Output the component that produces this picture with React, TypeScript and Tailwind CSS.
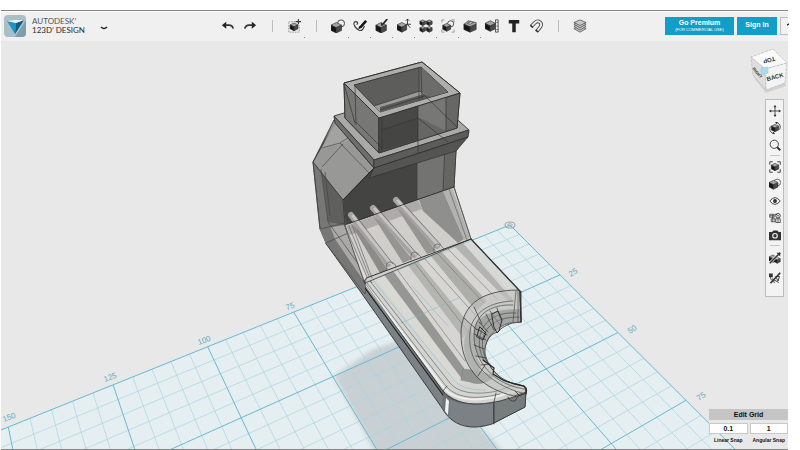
import React from "react";

/* ---------- Ground plane ---------- */

type Pt = [number, number];

// Perspective projection of a point on the work plane (millimetres) to scene units.
function project(u: number, v: number): Pt {
  const w = 1 - 0.001614 * u - 0.002751 * v;
  return [(510 - 3.358 * u + 0.4592 * v) / w, (225 + 0.6575 * u + 1.236 * v) / w];
}

const U_MAX = 168;
const V_MAX = 94;

function segment(a: Pt, b: Pt) {
  return `M${a[0].toFixed(1)} ${a[1].toFixed(1)}L${b[0].toFixed(1)} ${b[1].toFixed(1)}`;
}

function gridPath(major: boolean) {
  let d = "";
  for (let u = 0; u < U_MAX; u += 5) {
    if ((u % 25 === 0) === major) d += segment(project(u, 0), project(u, V_MAX * (1 - u / U_MAX)));
  }
  for (let v = 0; v < V_MAX; v += 5) {
    if ((v % 25 === 0) === major) d += segment(project(0, v), project(U_MAX * (1 - v / V_MAX), v));
  }
  return d;
}

const planeOutline = [project(0, 0), project(0, V_MAX), project(U_MAX, 0)]
  .map((p) => p.join(","))
  .join(" ");

const rulerMarks = [
  { x: 290, y: 309, t: "75", r: -20 },
  { x: 204, y: 343, t: "100", r: -20 },
  { x: 110, y: 380, t: "125", r: -20 },
  { x: 9, y: 420, t: "150", r: -20 },
  { x: 573, y: 275, t: "25", r: -32 },
  { x: 632, y: 332, t: "50", r: -32 },
  { x: 701, y: 399, t: "75", r: -32 },
];

function Ground() {
  return (
    <g>
      <polygon points={planeOutline} fill="#e5eef0" />
      <polygon
        points="334,376 372,350 400,340 520,470 385,470"
        fill="#c3cbcf"
        opacity="0.85"
        filter="url(#soft)"
      />
      <path d={gridPath(false)} stroke="#a9d6e2" strokeWidth="0.7" fill="none" />
      <path d={gridPath(true)} stroke="#68b9d3" strokeWidth="1" fill="none" />
      <ellipse cx="510" cy="225" rx="5" ry="3" fill="none" stroke="#93aebb" strokeWidth="1.2" />
      <ellipse cx="510" cy="225" rx="2.4" ry="1.3" fill="none" stroke="#93aebb" strokeWidth="0.8" />
      {rulerMarks.map((m) => (
        <text
          key={m.x}
          x={m.x}
          y={m.y}
          transform={`rotate(${m.r} ${m.x} ${m.y - 3})`}
          textAnchor="middle"
          fontSize="8"
          fill="#62a9c1"
          fontFamily='"Liberation Sans", sans-serif'
        >
          {m.t}
        </text>
      ))}
    </g>
  );
}

/* ---------- Solid model ---------- */

function Handle() {
  return (
    <g strokeLinejoin="round" strokeLinecap="round">
      {/* outer wall */}
      <path
        d="M326 243L345 225L365 282L442 390C450 402 470 406 492 402L526 390L525 407L492 424C470 431 452 426 442 408L360 291Z"
        fill="#7b8184"
        stroke="#333"
        strokeWidth="0.9"
      />
      <path d="M443 393L442 407L449 418L450 400Z" fill="#6d7376" />
      <path d="M446 398L445 411L448 415L449 401Z" fill="#f1f3f3" />
      <path d="M494 402L526 390L525 407L494 423Z" fill="#777c7d" stroke="#333" strokeWidth="0.7" />
      {/* top surface */}
      <path
        d="M365 283Q364 279 369 277L471 239L518 289L521 293L521 322L512 323C504 326 500 329 498 332C492 333 488 338 486 344C484 350 484 356 486 360C489 364 491 368 493 370C498 376 502 380 509 382C514 384 520 385 524 386Q528 388 526 393C518 396 510 398 500 401C478 406 457 406 443 391Z"
        fill="#d3d3d0"
        fillOpacity="0.95"
        stroke="#3a3a3a"
        strokeWidth="0.9"
      />
      {/* bands across the grip */}
      <path d="M374 276L447 374Q454 386 470 383L462 377L383 272Z" fill="#d9d9d4" />
      <path d="M382 272L392 269L464 368L462 379Z" fill="#969694" />
      <path d="M392 269L407 264L466 341L464 367Z" fill="#d6d5d1" />
      <path d="M407 264L417 260L471 326L463 338Z" fill="#b4b4b1" />
      <path d="M417 260L430 255L477 307L471 325Z" fill="#d7d6d2" />
      <path d="M430 255L441 251L487 301L476 311Z" fill="#adadaa" />
      <path d="M441 251L454 246L505 292L489 303Z" fill="#d7d6d3" />
      <path d="M454 246L463 243L514 301L508 301Z" fill="#b3b4b1" />
      <path d="M463 243L471 240L517 290L511 294Z" fill="#d7d9d6" />
      <path
        d="M396 268L465 361M414 262L470 334M424 258L477 317M437 253L484 303M448 249L497 299"
        fill="none"
        stroke="#70706e"
        strokeWidth="0.6"
      />
      <path d="M461 380L463 369L479 371L493 376L490 380Q480 386 470 382Z" fill="#929491" stroke="#707070" strokeWidth="0.4" />
      {/* work-plane lines seen through the body */}
      <path d="M372 279L453 379Q462 391 485 390" fill="none" stroke="#87bfce" strokeWidth="0.6" />
      <path d="M365 283L470 241M401 323L459 298M412 286L448 326" fill="none" stroke="#75b7ca" strokeWidth="0.7" opacity="0.7" />
      {/* rim lines */}
      <path d="M366 285L444 388C455 402 480 401 498 396L525 388" fill="none" stroke="#eef1f0" strokeWidth="2" />
      <path
        d="M370 281L450 383C459 394 479 395 497 391L516 384M367 283L446 386C458 400 480 399 500 394M365 283L443 393C455 407 482 405 494 402"
        fill="none"
        stroke="#555"
        strokeWidth="0.6"
      />
      <path d="M365 288L443 395" fill="none" stroke="#1f1f1f" strokeWidth="1.2" />
      <path d="M471 239L518 289L521 292" fill="none" stroke="#333" strokeWidth="1.3" />
      <path d="M496 393L494 402L494 424M443 391L447 386" fill="none" stroke="#333" strokeWidth="0.7" />
      {/* finger cut-out */}
      <path
        d="M518 290C500 290 487 294 479 299C466 307 461 320 461 334C461 349 465 364 477 377C486 386 500 393 514 396L526 392L524 386C510 384 499 378 492 369C486 360 483 352 486 344C488 336 496 327 509 323L521 322L520 292Z"
        fill="#c1c3c1"
        fillOpacity="0.6"
        stroke="#3b3b3b"
        strokeWidth="0.8"
      />
      <path d="M474 326C480 315 495 309 520 309L521 322L510 323C495 327 487 336 485 348L487 363L478 357C474 348 472 337 474 326Z" fill="#80827f" opacity="0.5" />
      <path d="M470 327C475 335 473 352 481 365L478 376C463 361 460 340 470 327Z" fill="#a7aaa8" opacity="0.7" />
      <path
        d="M516 291L513 322M518 290L518 322M513 305C495 304 482 311 477 322C471 336 475 352 482 363C492 378 506 386 524 389M516 313C502 312 490 317 484 326C477 337 478 351 485 362M519 317C505 317 495 320 488 328C480 338 481 351 488 363M513 301C489 302 476 312 471 326C467 344 472 360 481 369C491 380 506 389 522 393"
        fill="none"
        stroke="#424442"
        strokeWidth="0.65"
      />
      <path
        d="M490 311L500 325M486 314L494 330M497 308L501 321M479 322L488 332M474 334L486 340M477 329L487 335M474 345L484 349M476 356L486 358M481 365L490 364M474 307L482 324M464 318L477 330M478 376L485 365"
        fill="none"
        stroke="#303230"
        strokeWidth="0.7"
      />
      <path d="M492 314L498 311L502 320L499 331L497 333L494 327Z" fill="#a3a5a3" fillOpacity="0.5" stroke="#222" strokeWidth="0.9" />
      <path d="M480 327L486 333L483 340L477 337Z" fill="none" stroke="#222" strokeWidth="0.9" />
      <path d="M483 360L494 368L493 374L503 380C512 384 519 385 524 386Q527 388 526 394" fill="none" stroke="#222" strokeWidth="1.2" />
      <path d="M508 397Q510 402 515 401L518 396L524 394M515 391L520 396" fill="none" stroke="#333" strokeWidth="0.8" />
      <path d="M520 292L521 322" fill="none" stroke="#333" strokeWidth="1.4" />
    </g>
  );
}

function Ramp() {
  return (
    <g strokeLinejoin="round" strokeLinecap="round">
      <path d="M345 225L454 187L471 239L365 283Z" fill="#d0cecb" stroke="#3d3d3d" strokeWidth="0.8" />
      <path d="M346 226L418 200L422 209L350 235Z" fill="#adaaa7" />
      <path d="M419 200L443 191L464 239L458 243L423 211Z" fill="#8f8f8d" />
      <path d="M443 191L452 188L470 238L464 240Z" fill="#b2b2b0" />
      <path d="M345 226L367 277L365 283Z" fill="#dadad7" stroke="#555" strokeWidth="0.6" />
      <path d="M349 226L369 276M352 225L372 278M449 189L467 240M454 187L471 239" fill="none" stroke="#555" strokeWidth="0.6" />
      <path d="M351 224L380 273L388 270L362 232Z" fill="#8d8b88" />
      <path d="M373 216L403 263L412 259L384 224Z" fill="#979592" />
      <path d="M397 208L427 254L436 251L410 216Z" fill="#979592" />
      <g fill="none" strokeWidth="6" stroke="#a3a2a0">
        <path d="M351 215L388 264M373 208L414 255M396 200L437 246" />
      </g>
      <g fill="none" strokeWidth="3" stroke="#c6c4c1">
        <path d="M353 216L390 263M375 209L416 254M398 201L438 245" />
      </g>
      <g fill="none" stroke="#5d5d5b" strokeWidth="0.7">
        <path d="M356 216L393 264M379 210L418 255M402 202L441 245" />
        <path d="M387 269Q385 262 390 262T396 267M411 260Q410 252 414 252T421 257M434 252Q433 244 437 244T444 249" />
      </g>
      <path d="M350 223L454 187" stroke="#2b2b2b" strokeWidth="0.8" />
      <path d="M365 283Q363 279 369 277L471 239" fill="none" stroke="#333" strokeWidth="1" />
    </g>
  );
}

function Socket() {
  return (
    <g strokeLinejoin="round">
      {/* side walls */}
      <path d="M334 120L313 162L320 229L326 243L365 294L365 283L345 225L343 200L374 168Z" fill="#777775" stroke="#383838" strokeWidth="0.9" />
      <path d="M321 170L343 200L345 225L328 222L324 190Z" fill="#5f5f5e" />
      <path d="M320 229L345 225L365 282L326 243Z" fill="#aaa9a7" />
      <path d="M320 229L326 243L365 294L365 283L335 239L328 221Z" fill="#777776" />
      {/* chamber */}
      <path d="M374 164L469 132L456 151L454 187L345 225L343 200Z" fill="#6d6d6b" stroke="#383838" strokeWidth="0.9" />
      <path d="M371 169L417 154L417 200L346 225L343 200Z" fill="#444443" />
      <path d="M417 154L445 145L443 191L417 200Z" fill="#737371" />
      <path d="M445 145L456 149L454 187L443 191Z" fill="#656564" />
      <path d="M417 153L417 200M445 144L443 191M456 151L454 187" fill="none" stroke="#393939" strokeWidth="0.7" />
      {/* chamfer */}
      <path d="M335 123L374 168L343 200L313 162Z" fill="#989896" stroke="#333" strokeWidth="0.9" />
      <path d="M334 121L354 123L355 137L338 145L322 148Z" fill="#a8a8a7" opacity="0.7" />
      <path d="M322 148L340 143L370 174M340 143L354 134M322 167L343 144M313 162L320 229M321 169L328 222L372 283M325 172L330 216M343 200L345 225L365 283M320 229L345 223M326 243L348 233" fill="none" stroke="#444" strokeWidth="0.65" />
      <path d="M343 200L374 168L456 141" fill="none" stroke="#242424" strokeWidth="0.9" />
      {/* flange */}
      <path d="M334 116L423 89L469 130L374 160Z" fill="#a9a9a7" stroke="#333" strokeWidth="0.9" />
      <path d="M334 116L374 160L374 168L335 123Z" fill="#6e6e6d" stroke="#333" strokeWidth="0.9" />
      <path d="M374 160L469 130L468 137L374 168Z" fill="#5c5c5b" stroke="#333" strokeWidth="0.9" />
      <path d="M374 168L468 137L456 151L369 178Z" fill="#545453" stroke="#303030" strokeWidth="0.7" />
      {/* tube */}
      <path d="M344 83L422 62L460 93L457 128L379 153L345 118Z" fill="#737371" stroke="#333" strokeWidth="0.9" />
      <path d="M344 83L379 118L379 153L345 118Z" fill="#777775" stroke="#333" strokeWidth="0.9" />
      <path d="M379 118L460 93L457 128L379 153Z" fill="#676765" stroke="#333" strokeWidth="0.9" />
      <path d="M379 118L418 106L418 140L379 153Z" fill="#484847" />
      <path d="M418 106L446 97L446 131L418 140Z" fill="#777775" />
      <path d="M382 130L420 118L446 131L420 140L381 150Z" fill="#3f3f3e" opacity="0.3" />
      {/* rim and opening */}
      <path d="M344 83L422 62L460 93L379 118Z" fill="#aeaeac" stroke="#303030" strokeWidth="1" />
      <path d="M354 85L421 67L448 92L380 112Z" fill="#5d5d5b" stroke="#303030" strokeWidth="0.9" />
      <path d="M421 67L448 92L419 100L419 68Z" fill="#6c6c6a" />
      <path d="M374 106L420 91L430 97L380 112Z" fill="#9b9b99" />
      <path d="M380 107L424 94L432 97L380 112Z" fill="#5b5b5a" />
      <path
        d="M419 68L419 101M421 67L422 100M379 118L379 153M382 117L382 152M418 106L418 154M446 97L446 132M355 86L356 125M344 84L355 123M374 106L420 91L457 127M380 110L424 96M356 122L383 149M418 118L448 142M382 130L418 118"
        fill="none"
        stroke="#353535"
        strokeWidth="0.7"
      />
    </g>
  );
}

function Scene() {
  return (
    <svg
      className="absolute inset-0 h-full w-full"
      viewBox="1 41 787 408"
      preserveAspectRatio="xMidYMid slice"
      role="img"
      aria-label="3D model on work plane"
    >
      <defs>
        <filter id="soft">
          <feGaussianBlur stdDeviation="2" />
        </filter>
      </defs>
      <Ground />
      <Handle />
      <Socket />
      <Ramp />
    </svg>
  );
}

/* ---------- Icons ---------- */

function Cube({ x = 3, y = 4, s = 10 }: { x?: number; y?: number; s?: number }) {
  const h = s / 2;
  const q = s / 4;
  return (
    <g stroke="#2b2b2b" strokeWidth="0.7" strokeLinejoin="round">
      <path d={`M${x} ${y + q}l${h} ${-q}l${h} ${q}l${-h} ${q}z`} fill="#a5a5a5" />
      <path d={`M${x} ${y + q}l${h} ${q}v${h}l${-h} ${-q}z`} fill="#151515" />
      <path d={`M${x + s} ${y + q}l${-h} ${q}v${h}l${h} ${-q}z`} fill="#4a4a4a" />
    </g>
  );
}

const line = { fill: "none", stroke: "#333", strokeWidth: 1.2 } as const;

const glyphs: Record<string, React.ReactNode> = {
  Undo: (
    <>
      <path d="M1 7l5-4v8z" fill="#222" />
      <path d="M5 7h4q4 0 5 4" {...line} strokeWidth={1.8} />
    </>
  ),
  Redo: (
    <>
      <path d="M15 7l-5-4v8z" fill="#222" />
      <path d="M11 7H7q-4 0-5 4" {...line} strokeWidth={1.8} />
    </>
  ),
  Insert: (
    <>
      <path d="M10 3H2v12h12V7" {...line} stroke="#888" strokeWidth={0.9} strokeDasharray="2 1" />
      <Cube x={3.5} y={4.5} s={9} />
      <path d="M13 0v6M10 3h6" {...line} />
    </>
  ),
  Primitives: (
    <>
      <circle cx="11.500" cy="5" r="4" {...line} strokeWidth={1} />
      <Cube x={0} y={4} s={12} />
    </>
  ),
  Sketch: (
    <>
      <path d="M7 13C0 9 0 3 3 3c3 0 3 3 1 3M7 13c3 1 5-2 6-5" {...line} />
      <path d="M15 2L8 10" stroke="#111" strokeWidth="3" />
      <path d="M6 12l1-4 2 2z" fill="#111" />
    </>
  ),
  Construct: (
    <>
      <Cube x={1} y={4} s={12} />
      <path d="M14 0L9 6" stroke="#222" strokeWidth="2" />
      <path d="M7 8V4l3 3z" fill="#222" />
    </>
  ),
  Modify: (
    <>
      <Cube x={0} y={4} s={11} />
      <path d="M12 0v7M10 6h6M10 2l2-2 2 2M12 6l3 4" {...line} strokeWidth={1} />
    </>
  ),
  Pattern: (
    <>
      <Cube x={1} y={1} s={6.5} />
      <Cube x={8.5} y={1} s={6.5} />
      <Cube x={1} y={8.5} s={6.5} />
      <Cube x={8.5} y={8.5} s={6.5} />
    </>
  ),
  Grouping: (
    <>
      <path d="M1 4V1h3M12 1h3v3M15 12v3h-3M4 15H1v-3" {...line} stroke="#888" strokeWidth={0.9} />
      <circle cx="11" cy="5.500" r="3.500" {...line} strokeWidth={0.9} />
      <Cube x={2} y={5} s={9} />
    </>
  ),
  Combine: (
    <g stroke="#2b2b2b" strokeWidth="0.7" strokeLinejoin="round">
      <path d="M1 6l5-4 4 1 5 1v2l-7 3z" fill="#a5a5a5" />
      <path d="M1 6l7 3v6l-7-3z" fill="#151515" />
      <path d="M8 9l7-3v6l-7 3z" fill="#4a4a4a" />
      <path d="M5 5l4-2 3 1-4 2z" fill="#ddd" />
    </g>
  ),
  Measure: (
    <>
      <Cube x={0} y={2} s={12} />
      <path d="M12 1h3v14h-3z" fill="#eee" stroke="#333" strokeWidth="0.9" />
      <path d="M13 4h2M13 8h2M13 12h2" {...line} strokeWidth={0.8} />
    </>
  ),
  Text: <path d="M2 1h12v4H10v10H6V5H2z" fill="#222" />,
  Snap: (
    <>
      <path d="M3 8l4-4c3-3 9 0 6 5l-4 5" {...line} strokeWidth={4} />
      <path d="M3 8l4-4c3-3 9 0 6 5l-4 5" {...line} stroke="#eee" strokeWidth={2.2} />
      <path d="M1.500 7l3 3M7.500 12.500l3 2.500" {...line} strokeWidth={1.8} />
    </>
  ),
  Materials: (
    <g stroke="#444" strokeWidth="0.8" fill="#c8c8c8">
      <path d="M1 11l7 4 7-4-7-3z" />
      <path d="M1 8.500l7 4 7-4-7-3z" />
      <path d="M1 6l7 4 7-4-7-3z" />
      <path d="M1 4l7 3.500L15 4 8 1z" />
    </g>
  ),
  Pan: (
    <>
      <path d="M8 1v14M1 8h14" {...line} strokeWidth={1.1} />
      <path d="M8 0l2 3H6zM8 16l2-3H6zM0 8l3-2v4zM16 8l-3-2v4z" fill="#333" />
    </>
  ),
  Orbit: (
    <>
      <Cube x={3} y={3} s={10} />
      <path d="M5 15C1 13 0 9 2 6M11 1c4 2 5 6 3 9" {...line} />
      <path d="M8 0l4 0-2 3zM8 16l-4 0 2-3z" fill="#333" />
    </>
  ),
  Zoom: (
    <>
      <circle cx="7" cy="7" r="5.500" {...line} />
      <path d="M11 11l4 4" {...line} strokeWidth={2.6} />
    </>
  ),
  Fit: (
    <>
      <path d="M1 5V1h4M11 1h4v4M15 11v4h-4M5 15H1v-4" {...line} />
      <Cube x={3} y={3} s={10} />
    </>
  ),
  Shading: (
    <>
      <circle cx="11" cy="6" r="4.500" {...line} strokeWidth={0.9} />
      <Cube x={0} y={3} s={12} />
    </>
  ),
  Visibility: (
    <>
      <path d="M1 8q7-9 14 0q-7 9-14 0z" {...line} />
      <circle cx="8" cy="8" r="2.600" fill="#333" />
    </>
  ),
  Grid: (
    <>
      <path d="M1 3h6v4H1zM3 9h5v4H3zM9 9h6v5H9zM8 3h3M1 5h6M5 3v10M12 9v5" {...line} strokeWidth={1} />
      <circle cx="12" cy="5" r="3" {...line} />
      <circle cx="12" cy="5" r="1" fill="#333" />
    </>
  ),
  Screenshot: (
    <>
      <path d="M0 4h4l2-2h5l2 2h3v11H0z" fill="#333" />
      <circle cx="8" cy="9" r="3.800" fill="#eee" />
      <circle cx="8" cy="9" r="2.200" fill="#333" />
    </>
  ),
  "Hide solids": (
    <>
      <Cube x={0} y={4} s={10} />
      <Cube x={7} y={7} s={8} />
      <path d="M1 15L15 1" stroke="#f3f3f3" strokeWidth={3.6} />
      <path d="M1 15L15 1" {...line} strokeWidth={2} />
      <path d="M10 1h5v5z" fill="#333" />
    </>
  ),
  "Hide sketches": (
    <>
      <path d="M8 14C1 11 1 5 4 4M4 9l9 5M9 6h5l-2 6z" {...line} />
      <path d="M0 2h5v5H0z" fill="#333" />
      <path d="M2 15L15 1" {...line} strokeWidth={2.2} />
    </>
  ),
};

function Glyph({ name, className }: { name: string; className: string }) {
  return (
    <svg viewBox="0 0 16 16" className={className} aria-hidden="true">
      {glyphs[name]}
    </svg>
  );
}

/* ---------- Header ---------- */

const tools: { name: string; menu?: boolean }[][] = [
  [{ name: "Undo" }, { name: "Redo" }],
  [{ name: "Insert", menu: true }],
  [
    { name: "Primitives", menu: true },
    { name: "Sketch", menu: true },
    { name: "Construct", menu: true },
    { name: "Modify", menu: true },
    { name: "Pattern", menu: true },
    { name: "Grouping", menu: true },
    { name: "Combine", menu: true },
    { name: "Measure" },
    { name: "Text" },
    { name: "Snap" },
  ],
  [{ name: "Materials" }],
];

function Header() {
  return (
    <header className="flex h-[30px] shrink-0 items-center border-t border-white bg-[#f0f0f0] pb-0.5">
      <div className="flex w-[216px] shrink-0 items-center pl-[3px]">
        <svg viewBox="0 0 22 22" className="size-[22px]" aria-hidden="true">
          <rect width="22" height="22" rx="4" fill="#a9bec6" />
          <path d="M11 22h7q4 0 4-4V5z" fill="#7f9eab" />
          <path d="M3 6l9 2-1 11z" fill="#1b95c4" />
          <path d="M20 5l-8 3-1 11z" fill="#0d5c88" />
          <path d="M3 6l8-1 9 0-8 3z" fill="#e4f4fa" />
        </svg>
        <div className="ml-1.5 w-[50px] font-['Lato',sans-serif] text-[8px] leading-[9px] whitespace-nowrap text-[#2b2b2b]">
          <div className="text-[#555]">AUTODESK’</div>
          <div>123D’ DESIGN</div>
        </div>
        <button aria-label="Application menu" className="ml-4 flex size-3 items-center justify-center pt-1">
          <svg viewBox="0 0 8 4" className="h-1 w-2" aria-hidden="true">
            <path d="M1 1q3 3 6 0" fill="none" stroke="#222" strokeWidth="1.6" />
          </svg>
        </button>
      </div>
      <nav aria-label="Tools" className="flex shrink-0 items-center">
        {tools.map((group, i) => (
          <React.Fragment key={i}>
            {i > 0 && (
              <div className="flex w-[22px] justify-center">
                <div className="h-3 w-px bg-[#bdbdbd]" />
              </div>
            )}
            {group.map((t) => (
              <button
                key={t.name}
                aria-label={t.name}
                className="relative flex h-7 w-[22px] items-center justify-center"
              >
                <Glyph name={t.name} className="size-3.5" />
                {t.menu && <span className="absolute right-0 bottom-0.5 size-px bg-[#8a8a8a]" />}
              </button>
            ))}
          </React.Fragment>
        ))}
      </nav>
      <div className="ml-auto flex h-[18px] gap-[3px] font-['Liberation_Sans',sans-serif] font-bold text-white">
        <button className="w-[69px] bg-[#129ec7]">
          <span className="block text-[7px] leading-[9px]">Go Premium</span>
          <span className="block text-[4px] leading-[6px] font-normal whitespace-nowrap">(FOR COMMERCIAL USE)</span>
        </button>
        <button className="w-10 bg-[#129ec7] text-[7px]">Sign In</button>
        <button
          aria-label="Help"
          className="h-[18px] w-2 border border-r-0 border-[#bbb] bg-[#f2f2f2] pt-1 pl-1.5"
        >
          <svg viewBox="0 0 2 9" className="block h-[9px] w-0.5" aria-hidden="true">
            <path d="M0 2l2-1" stroke="#222" strokeWidth="1.5" />
          </svg>
        </button>
      </div>
    </header>
  );
}

/* ---------- Viewport overlays ---------- */

function ViewCube() {
  return (
    <svg
      viewBox="748 46 42 48"
      className="absolute top-[5px] -right-0.5 h-12 w-[42px]"
      role="img"
      aria-label="View cube"
      fontFamily='"Liberation Sans", sans-serif'
      fontWeight="bold"
      textAnchor="middle"
    >
      <path d="M753 77L766 93L786 86L785 82Z" fill="#d2d2d2" />
      <g stroke="#b9b9b9" strokeWidth="0.7" strokeDasharray="3 1">
        <path d="M773 49L787 63L765 69L751 57Z" fill="#fafafa" />
        <path d="M751 57L765 69L766 90L753 75Z" fill="#dedede" />
        <path d="M765 69L787 63L785 83L766 90Z" fill="#f3f3f3" />
      </g>
      <path d="M761 68l7-1 0 6-7 2z" fill="#a9dbe9" stroke="#8ecbdc" strokeWidth="0.5" />
      <text x="769" y="62" fontSize="6" fill="#333" transform="rotate(165 769 60)">TOP</text>
      <text x="775" y="79" fontSize="6" fill="#333" transform="rotate(-16 775 77)">BACK</text>
      <text x="757" y="74" fontSize="4" fill="#333" transform="rotate(50 757 73)">RIGHT</text>
    </svg>
  );
}

const viewTools = [
  { names: ["Pan", "Orbit", "Zoom"], row: "h-[17px]" },
  { names: ["Fit", "Shading", "Visibility", "Grid", "Screenshot"], row: "h-[17px]" },
  { names: ["Hide solids", "Hide sketches"], row: "h-5" },
];

function ViewTools() {
  return (
    <aside
      aria-label="View tools"
      className="absolute top-[58px] right-1 flex w-[19px] flex-col items-center border border-[#bcbcbc] bg-[#f3f3f3] pt-0.5 pb-2"
    >
      {viewTools.map((group, i) => (
        <React.Fragment key={i}>
          {i > 0 && <div className="my-0.5 h-px w-2.5 bg-[#c6c6c6]" />}
          {group.names.map((name) => (
            <button key={name} aria-label={name} className={`flex w-full items-center justify-center ${group.row}`}>
              <Glyph name={name} className="size-3" />
            </button>
          ))}
        </React.Fragment>
      ))}
    </aside>
  );
}

function SnapField({ id, label, value }: { id: string; label: string; value: string }) {
  return (
    <div className="flex-1">
      <input
        id={id}
        defaultValue={value}
        className="block h-[11px] w-full border border-[#c9c9c9] bg-white text-center text-[7px] leading-[9px]"
      />
      <label htmlFor={id} className="mt-[3px] block text-[5px] leading-[7px] whitespace-nowrap">
        {label}
      </label>
    </div>
  );
}

function GridPanel() {
  return (
    <form className="absolute right-0 bottom-[5px] w-[79px] font-['Liberation_Sans',sans-serif] font-bold text-[#111]">
      <button type="button" className="block h-[11px] w-full bg-[#c5c5c5] text-[7px] leading-[11px]">
        Edit Grid
      </button>
      <div className="mt-[3px] flex gap-0.5 text-center">
        <SnapField id="linear" label="Linear Snap" value="0.1" />
        <SnapField id="angular" label="Angular Snap" value="1" />
      </div>
    </form>
  );
}

export default function App() {
  return (
    <div className="h-screen bg-white pt-2.5 pr-3 pl-px">
      <div className="flex h-full flex-col border-t border-b border-[#858585]">
        <Header />
        <main className="relative min-h-0 flex-1 overflow-hidden bg-[#e8e8e8]">
          <Scene />
          <ViewCube />
          <ViewTools />
          <GridPanel />
        </main>
      </div>
    </div>
  );
}
